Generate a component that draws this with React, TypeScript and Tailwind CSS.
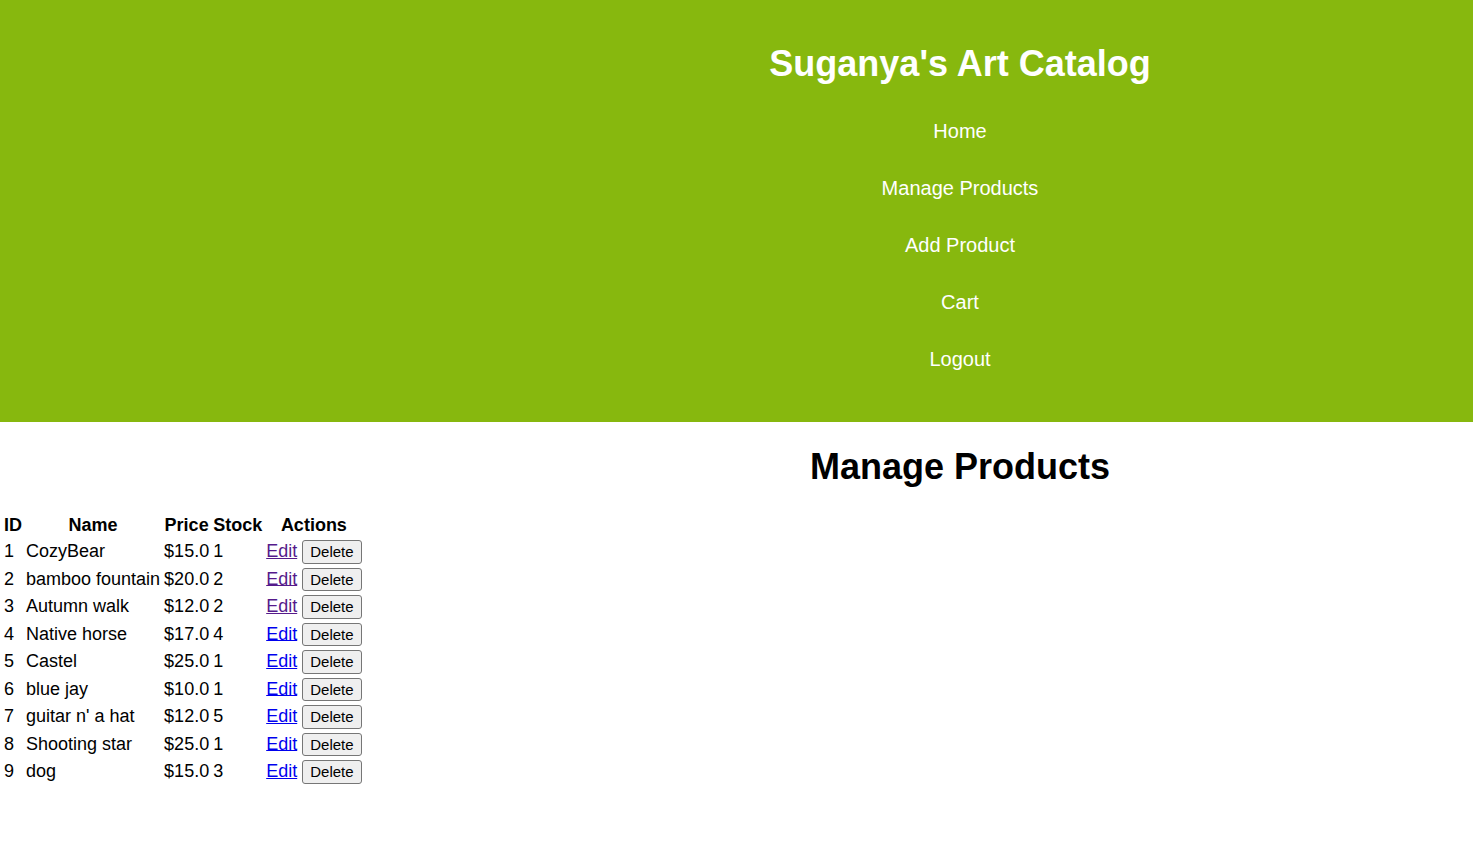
const NAV = ["Home", "Manage Products", "Add Product", "Cart", "Logout"];

const PRODUCTS = [
  { id: 1, name: "CozyBear", price: "$15.0", stock: 1, visited: true },
  { id: 2, name: "bamboo fountain", price: "$20.0", stock: 2, visited: true },
  { id: 3, name: "Autumn walk", price: "$12.0", stock: 2, visited: true },
  { id: 4, name: "Native horse", price: "$17.0", stock: 4, visited: false },
  { id: 5, name: "Castel", price: "$25.0", stock: 1, visited: false },
  { id: 6, name: "blue jay", price: "$10.0", stock: 1, visited: false },
  { id: 7, name: "guitar n' a hat", price: "$12.0", stock: 5, visited: false },
  { id: 8, name: "Shooting star", price: "$25.0", stock: 1, visited: false },
  { id: 9, name: "dog", price: "$15.0", stock: 3, visited: false },
];

export default function App() {
  return (
    <div className="min-h-[850px] bg-white text-black font-['Liberation_Sans',Arial,sans-serif]">
      {/* Header */}
      <header className="h-[422px] bg-[#87b80e] pl-[447px] pt-[43px] text-center text-white">
        <h1 className="text-[36px] leading-[41px] font-bold">Suganya's Art Catalog</h1>
        <nav className="mt-[36px] flex flex-col items-center gap-[34px]">
          {NAV.map((item) => (
            <a key={item} href="#" className="text-[20px] leading-[23px] text-white">
              {item}
            </a>
          ))}
        </nav>
      </header>

      {/* Page title */}
      <h2 className="mt-[24px] pl-[447px] text-center text-[36px] leading-[41px] font-bold">
        Manage Products
      </h2>

      {/* Products table */}
      <table className="mt-[25px] ml-px border-separate border-spacing-[2px] text-[18px] leading-[21px]">
        <thead>
          <tr>
            <th className="p-px text-center font-bold">ID</th>
            <th className="p-px text-center font-bold">Name</th>
            <th className="p-px text-center font-bold">Price</th>
            <th className="p-px text-center font-bold">Stock</th>
            <th className="p-px text-center font-bold">Actions</th>
          </tr>
        </thead>
        <tbody>
          {PRODUCTS.map((p) => (
            <tr key={p.id}>
              <td className="p-px align-middle">{p.id}</td>
              <td className="p-px align-middle whitespace-nowrap">{p.name}</td>
              <td className="p-px align-middle">{p.price}</td>
              <td className="p-px align-middle">{p.stock}</td>
              <td className="p-px align-middle whitespace-nowrap">
                <a
                  href="#"
                  className={p.visited ? "text-[#551a8b] underline" : "text-[#0000ee] underline"}
                >
                  Edit
                </a>{" "}
                <button className="h-[23.5px] rounded-[3px] border border-[#767676] bg-[#efefef] px-[7px] align-middle text-[15px] leading-[17px] text-black">
                  Delete
                </button>
              </td>
            </tr>
          ))}
        </tbody>
      </table>
    </div>
  );
}
